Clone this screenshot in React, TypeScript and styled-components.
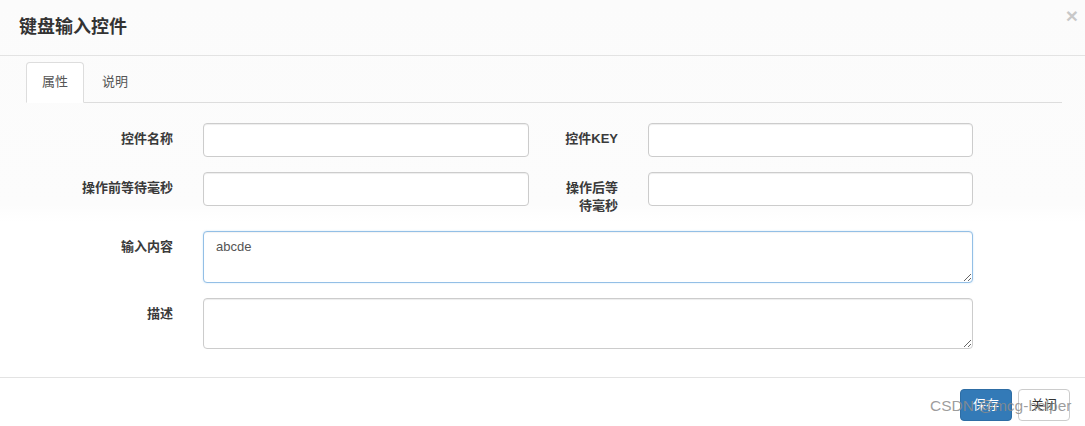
import React from "react";
import styled, { createGlobalStyle } from "styled-components";

const Global = createGlobalStyle`
  html, body { margin: 0; padding: 0; background: #fff; }
  body {
    font-family: "Liberation Sans", "Noto Sans CJK SC", sans-serif;
    font-size: 13px;
    line-height: 1.42857;
    color: #333;
  }
  * { box-sizing: border-box; }
`;

const Modal = styled.div`
  position: relative;
  width: 1085px;
  height: 426px;
  overflow: hidden;
  background: linear-gradient(#fbfbfb 0, #fcfcfc 205px, #fff 222px);
`;

const Header = styled.div`
  height: 56px;
  padding: 0 7px 0 19px;
  display: flex;
  align-items: center;
  justify-content: space-between;
  border-bottom: 1px solid #e3e3e3;
`;

const Title = styled.h4`
  margin: 0;
  font-size: 18px;
  font-weight: 700;
  color: #333;
  line-height: 25px;
`;

const Close = styled.button`
  align-self: flex-start;
  margin-top: 5px;
  padding: 0;
  border: 0;
  background: transparent;
  font-family: "Liberation Sans", sans-serif;
  font-size: 21px;
  font-weight: 700;
  line-height: 1;
  color: #000;
  opacity: 0.2;
  cursor: pointer;
`;

const Body = styled.div`
  padding: 6px 23px 28px 26px;
`;

const Tabs = styled.ul`
  display: flex;
  margin: 0;
  padding: 0;
  list-style: none;
  border-bottom: 1px solid #ddd;
`;

const Tab = styled.li<{ $active?: boolean }>`
  margin-right: 2px;
  margin-bottom: -1px;
  padding: 10px 15px;
  line-height: 18.57px;
  font-size: 13px;
  color: #555;
  border: 1px solid ${(p) => (p.$active ? "#ddd" : "transparent")};
  border-bottom-color: transparent;
  border-radius: 4px 4px 0 0;
  background: ${(p) => (p.$active ? "#fff" : "transparent")};
`;

const FormGrid = styled.div`
  margin-top: 20px;
  display: grid;
  grid-template-columns: 162px 356px 89px 355px;
  row-gap: 15px;
  align-items: start;
`;

const Label = styled.label`
  padding: 7px 15px 0;
  text-align: right;
  font-size: 13px;
  font-weight: 700;
  line-height: 18.57px;
  color: #3a3a3a;
`;

const Field = styled.div<{ $wide?: boolean }>`
  padding: 0 15px;
  grid-column: ${(p) => (p.$wide ? "2 / 5" : "auto")};
`;

const Input = styled.input`
  display: block;
  width: 100%;
  height: 34px;
  padding: 6px 12px;
  font-family: inherit;
  font-size: 13px;
  color: #555;
  background: #fff;
  border: 1px solid #ccc;
  border-radius: 4px;
  box-shadow: inset 0 1px 1px rgba(0, 0, 0, 0.075);
  outline: none;
`;

const TextArea = styled.textarea<{ $focus?: boolean; $h: number }>`
  display: block;
  width: 100%;
  height: ${(p) => p.$h}px;
  padding: 6px 12px;
  font-family: inherit;
  font-size: 13px;
  line-height: 18.57px;
  color: #555;
  background: #fff;
  border: 1px solid ${(p) => (p.$focus ? "#93bfe6" : "#ccc")};
  border-radius: 4px;
  box-shadow: ${(p) =>
    p.$focus
      ? "inset 0 1px 1px rgba(0,0,0,.05), 0 0 2px rgba(102,175,233,.35)"
      : "inset 0 1px 1px rgba(0,0,0,.075)"};
  outline: none;
  resize: vertical;
`;

const Footer = styled.div`
  display: flex;
  justify-content: flex-end;
  gap: 6px;
  padding: 11px 15px 15px;
  border-top: 1px solid #e3e3e3;
`;

const Button = styled.button<{ $primary?: boolean }>`
  padding: 6px 12px;
  font-family: inherit;
  font-size: 13px;
  line-height: 18.57px;
  border-radius: 4px;
  border: 1px solid ${(p) => (p.$primary ? "#2e6da4" : "#ccc")};
  background: ${(p) => (p.$primary ? "#337ab7" : "#fff")};
  color: ${(p) => (p.$primary ? "#fff" : "#333")};
  cursor: pointer;
`;

const Watermark = styled.div`
  position: absolute;
  left: 930px;
  top: 396px;
  font-family: "Liberation Sans", sans-serif;
  font-size: 15.5px;
  line-height: 20px;
  color: rgba(140, 140, 140, 0.85);
  pointer-events: none;
  white-space: nowrap;
`;

export default function App() {
  return (
    <>
      <Global />
      <Modal>
        <Header>
          <Title>键盘输入控件</Title>
          <Close aria-label="close">×</Close>
        </Header>
        <Body>
          <Tabs>
            <Tab $active>属性</Tab>
            <Tab>说明</Tab>
          </Tabs>
          <FormGrid>
            <Label>控件名称</Label>
            <Field>
              <Input />
            </Field>
            <Label>控件KEY</Label>
            <Field>
              <Input />
            </Field>

            <Label>操作前等待毫秒</Label>
            <Field>
              <Input />
            </Field>
            <Label>操作后等待毫秒</Label>
            <Field>
              <Input />
            </Field>

            <Label>输入内容</Label>
            <Field $wide>
              <TextArea $focus $h={52} defaultValue="abcde" />
            </Field>

            <Label>描述</Label>
            <Field $wide>
              <TextArea $h={51} />
            </Field>
          </FormGrid>
        </Body>
        <Footer>
          <Button $primary>保存</Button>
          <Button>关闭</Button>
        </Footer>
        <Watermark>CSDN @mcg-helper</Watermark>
      </Modal>
    </>
  );
}
